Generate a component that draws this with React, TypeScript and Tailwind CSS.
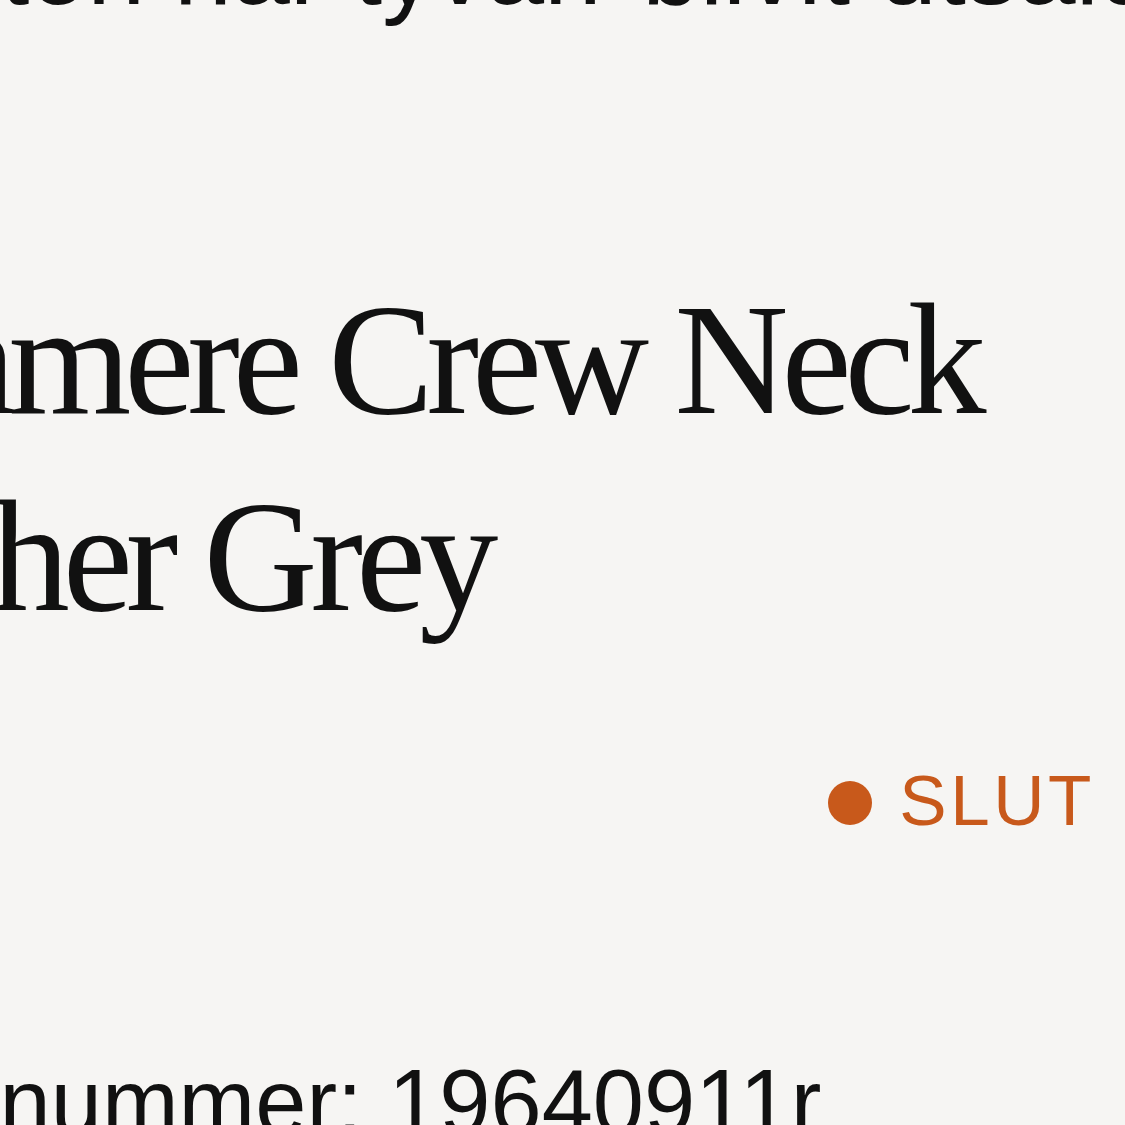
export default function App() {
  return (
    <div className="w-[1125px] h-[1125px] overflow-hidden bg-[#f6f5f3] text-[#111111]">
      <p className="ml-[-514px] mt-[-94px] whitespace-nowrap text-[104px] leading-[1.2] font-['Liberation_Sans',Arial,sans-serif]">
        Denna färgton har tyvärr blivit utsåld.
      </p>
      <h1 className="ml-[-279px] mt-[230px] whitespace-nowrap font-['Liberation_Serif','Times_New_Roman',serif] text-[158px] leading-[197px] tracking-[-0.045em] font-normal">
        Cashmere Crew Neck
        <br />
        Heather Grey
      </h1>
      <div className="mt-[110px] h-[71px] pr-[30px] flex justify-end items-center gap-[27px]">
        <span className="mt-[5px] w-[44px] h-[44px] rounded-full bg-[#c8591b]" />
        <span className="text-[71px] leading-none tracking-[0.05em] text-[#c8591b] font-['Liberation_Sans',Arial,sans-serif]">
          SLUT
        </span>
      </div>
      <p className="ml-[-256px] mt-[211px] whitespace-nowrap text-[92px] leading-[1.2] font-['Liberation_Sans',Arial,sans-serif]">
        Artikelnummer: 19640911r
      </p>
    </div>
  );
}
